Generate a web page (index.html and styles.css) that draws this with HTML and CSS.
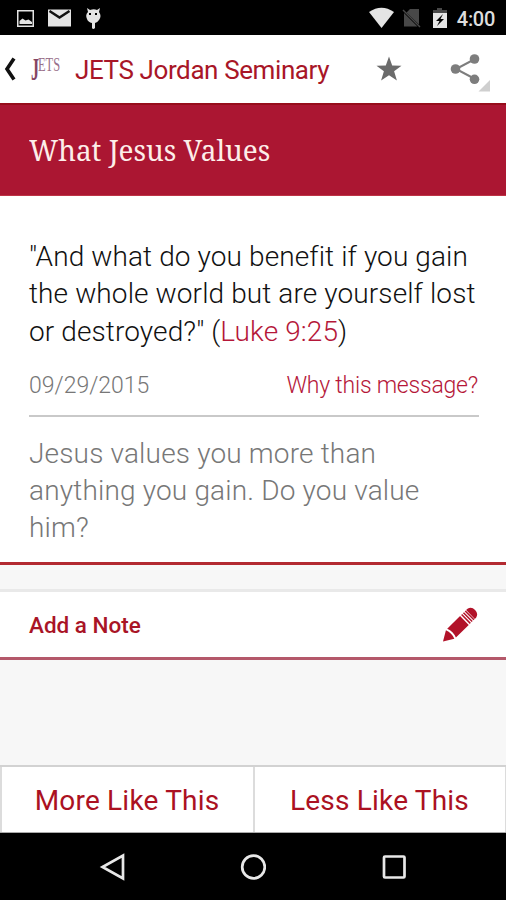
FILE: index.html
```html
<!DOCTYPE html>
<html lang="en">
<head>
<meta charset="utf-8">
<title>JETS Jordan Seminary</title>
<link rel="stylesheet" href="styles.css">
</head>
<body>
<div class="status">
  <svg width="506" height="35" viewBox="0 0 506 35">
    <g class="status-icons">
      <path fill-rule="evenodd" d="M17 10h17v17H17zM18.500 11.500v14h14v-14z"/>
      <path d="M19.500 24v-3l3-2.500 3 2 3-1 3.500 2.500v2z"/>
      <path d="M48 9.500h23v17H48z"/>
      <path d="M49.500 11l10 6.500 10-6.500" class="envelope-fold"/>
      <path d="M87 8l3 2q4-1.500 7 0l3-2-1 4q3 4 0 8-2 3-4 3v5q-2 2-3 0v-5q-4-1-5-4-2-4 1-7z"/>
      <path class="cut" d="M89 13h2v2h-2zM95 13h2v2h-2z"/>
      <path d="M369 12q12.500-8.500 25 0L381.500 28z"/>
      <path class="dim" d="M410 9h9v15.500L406.500 12.500zM404 13l13.500 13.500H404z"/>
      <path class="dim-line" d="M403 10l17 17"/>
      <path class="dim" d="M433 10h4V8h5v2h5v4h-14z"/>
      <path d="M433 13h14v15h-14z"/>
      <path class="cut" d="M443 14l-7 7h3.500L437 26l7-7h-3.500z"/>
    </g>
  </svg>
  <span class="clock">4:00</span>
</div>
<header class="appbar">
  <svg class="back" width="14" height="24" viewBox="0 0 14 24"><path d="M12 1.500L5 12l7 10.500"/></svg>
  <div class="logo"><span class="logo-cap">J</span><span class="logo-rest">ETS</span></div>
  <h1 class="title"><span>JETS Jordan Seminary</span></h1>
  <svg class="star" width="26" height="26" viewBox="0 0 26 26"><path d="M13 .5l3.200 9 9.300.2-7.400 5.600 2.800 9.200L13 19.200l-7.900 5.300 2.800-9.200L.5 9.700l9.300-.2z"/></svg>
  <svg class="share" width="42" height="42" viewBox="0 0 42 42"><path class="links" d="M26 9L7 19l19 10"/><g class="nodes"><circle cx="25.500" cy="9" r="4.800"/><circle cx="6.500" cy="19" r="4.800"/><circle cx="25.500" cy="29.300" r="4.800"/></g><path class="corner" d="M41 30v11.500H29.500z"/></svg>
</header>
<section class="banner"><h2>What Jesus Values</h2></section>
<main class="message">
  <p class="quote"><span>"And what do you benefit if you gain</span><br><span>the whole world but are yourself lost</span><br><span>or destroyed?" (<a>Luke 9:25</a>)</span></p>
  <div class="meta"><span>09/29/2015</span><a class="why">Why this message?</a></div>
  <p class="thought"><span>Jesus values you more than</span><br><span>anything you gain. Do you value</span><br><span>him?</span></p>
</main>
<section class="note">
  <span class="note-label">Add a Note</span>
  <svg class="pencil" width="36" height="36" viewBox="0 0 36 36"><g transform="translate(1 34.500) rotate(-44.500)"><path d="M0 0L10-6Q12.500 0 10 6zM12-6.200H30v12.400H12Q14.500 0 12-6.200zM38.500-6.200h2Q45-5 45 0T40.500 6.200h-2z"/><path class="bands" d="M32.200-6.200v12.400M34.800-6.200v12.400M37.300-6.200v12.400"/></g></svg>
</section>
<div class="actions"><a class="action"><span>More Like This</span></a><a class="action less"><span>Less Like This</span></a></div>
<nav class="navbar">
  <svg width="26" height="28" viewBox="0 0 26 28"><path d="M24 2.500v23L3.500 14z"/></svg>
  <svg width="26" height="28" viewBox="0 0 26 28"><circle cx="13.500" cy="14" r="11.300"/></svg>
  <svg width="26" height="28" viewBox="0 0 26 28"><rect x="3" y="3.500" width="20.500" height="21" rx="1"/></svg>
</nav>
</body>
</html>
```
FILE: styles.css
```css
* { box-sizing: border-box; }
body {
  margin: 0;
  width: 506px;
  height: 900px;
  display: flex;
  flex-direction: column;
  overflow: hidden;
  background: #f7f7f7;
  font-family: Roboto, sans-serif;
  color: #111;
}
h1, h2, p { margin: 0; font-weight: 400; }
svg { display: block; flex: none; }
span { white-space: nowrap; }

.status { height: 35px; background: #000; position: relative; flex: none; }
.status-icons { fill: #e4e4e4; }
.status-icons .cut { fill: #000; }
.status-icons .dim { fill: #484848; }
.status-icons .envelope-fold { fill: none; stroke: #111; stroke-width: 2.500; }
.dim-line { stroke: #484848; stroke-width: 1.500; }
.clock { position: absolute; right: 11px; top: 7px; font-size: 20px; line-height: 24px; font-weight: 500; color: #ddd; letter-spacing: -.3px; }

.appbar { height: 68px; flex: none; background: #fff; display: flex; align-items: center; padding-left: 2px; }
.back { fill: none; stroke: #111; stroke-width: 3.600; }
.logo { width: 30px; margin-left: 15px; height: 30px; display: flex; font-family: "Liberation Serif", serif; white-space: nowrap; color: #864563; }
.logo-cap { font-size: 32px; line-height: 30px; width: 7px; font-weight: 700; transform: scaleX(.5); transform-origin: left; }
.logo-rest { font-size: 18px; line-height: 23px; color: #98708a; transform: scaleX(.69); transform-origin: left; }
.title { width: 255px; margin-left: 14px; font-size: 26px; line-height: 32px; letter-spacing: -.4px; color: #a81627; padding-top: 2px; }
.star { margin-left: 46px; fill: #6b6b6b; }
.share { margin-left: 47px; margin-top: 4px; }
.links { fill: none; stroke: #7d7d7d; stroke-width: 2; }
.nodes { fill: #7d7d7d; }
.corner { fill: #cfcfcf; }

.banner { height: 93px; flex: none; background: #ab1632; border-top: 2px solid #970d1b; border-bottom: 1px solid #bd3345; padding: 26px 0 0 29px; }
.banner h2 { font-family: "Noto Serif", "Droid Serif", "DejaVu Serif", serif; font-size: 29.500px; line-height: 38px; color: #fdeee9; transform: scaleX(.945); transform-origin: left; }

.message { height: 369px; flex: none; background: #fff; padding: 42px 27px 0 29px; border-bottom: 3px solid #b32a31; }
.quote, .thought { font-size: 28px; line-height: 37.300px; font-weight: 300; letter-spacing: .11px; }
.quote a { color: #b51739; }
.meta { display: flex; justify-content: space-between; margin-top: 21px; height: 46px; border-bottom: 2px solid #c9c9c9; font-size: 23px; line-height: 29px; font-weight: 300; color: #777; }
.why { color: #b51739; white-space: nowrap; letter-spacing: -.22px; margin-right: 1px; }
.thought { margin-top: 18px; color: #777; letter-spacing: .17px; }

.note { height: 71px; flex: none; margin-top: 24px; background: #fff; border-top: 3px solid #e9e9e9; border-bottom: 3px solid #b4586a; display: flex; align-items: center; justify-content: space-between; padding: 0 28px 0 29px; }
.note-label { font-size: 22.500px; line-height: 28px; font-weight: 500; color: #a91426; }
.pencil { fill: #b21229; }
.bands { stroke: #b21229; stroke-width: 1.500; }

.actions { height: 68px; margin-top: auto; flex: none; display: grid; grid-template-columns: 253px 253px; background: #fff; border-top: 2px solid #d2d2d2; border-bottom: 1px solid #aaa; }
.action { border-left: 2px solid #dcdcdc; display: flex; justify-content: center; align-items: center; font-size: 28px; line-height: 34px; letter-spacing: .2px; color: #ab1122; padding: 3px 1px 0 0; }
.less { border-right: 1px solid #dcdcdc; }
.navbar { height: 67px; flex: none; background: #000; display: flex; justify-content: center; gap: 115px; padding-top: 20px; }
.navbar svg { fill: none; stroke: #e8e8e8; stroke-width: 2.700; }
```
